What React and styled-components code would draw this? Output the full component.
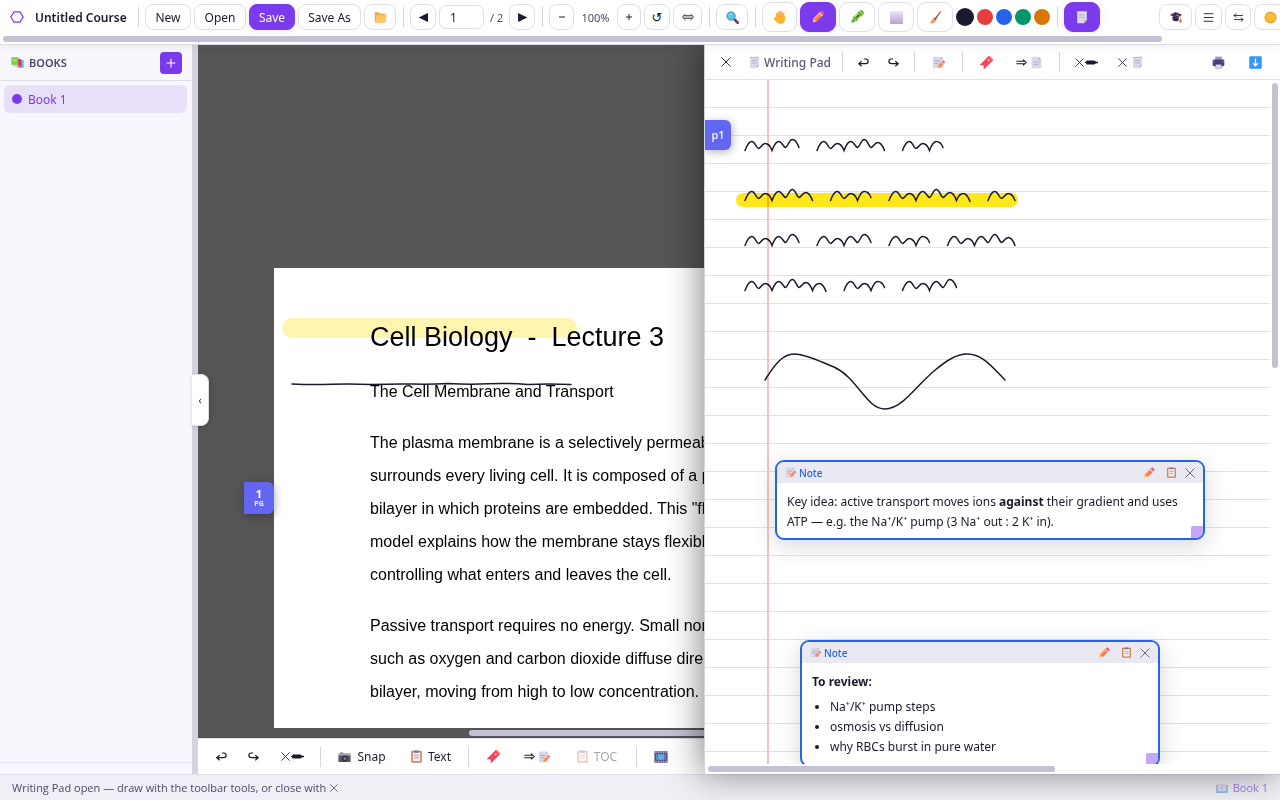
import React from 'react'
import styled, { createGlobalStyle, css } from 'styled-components'

const GlobalStyle = createGlobalStyle`
* {
  box-sizing: border-box;
}
body {
  margin: 0;
  overflow: hidden;
  color: #1a1a2e;
  font-family: "Noto Sans", "Open Sans", sans-serif;
  font-size: 12px;
}
button, input {
  font-family: inherit;
  font-size: 12px;
  color: inherit;
  margin: 0;
}
svg {
  flex: none;
}
`

const Screen = styled.div`
display: flex;
flex-direction: column;
height: 100vh;
background-color: #ffffff;
`

/* ---------- top bar ---------- */

const TopBar = styled.header`
flex: none;
position: relative;
z-index: 3;
background-color: #ffffff;
border-bottom: 1px solid #dcdbe6;
box-shadow: 0 2px 8px rgba(0, 0, 0, 0.06);
`

const Tools = styled.div`
display: flex;
align-items: center;
gap: 3px;
height: 34px;
overflow: hidden;
`

const Brand = styled.div`
flex: none;
display: flex;
align-items: center;
gap: 11px;
width: 131px;
padding-left: 10px;
font-weight: 600;
white-space: nowrap;
`

const Sep = styled.span`
flex: none;
width: 1px;
height: 20px;
margin: 0 3px 0 4px;
background-color: #d4d4e0;
`

const ToolButton = styled.button`
flex: none;
display: flex;
align-items: center;
justify-content: center;
width: ${props => props.$w}px;
height: 26px;
padding: 0;
border: 1px solid #dfdeea;
border-radius: 8px;
background-color: #ffffff;
white-space: nowrap;
${props => props.$tall && css`
  height: 30px;
  border-radius: 9px;
`}
${props => props.$active && css`
  border-color: #7c3aed;
  background-color: #7c3aed;
  color: #ffffff;
  box-shadow: 0 2px 8px rgba(124, 58, 237, 0.12);
`}
`

const PageInput = styled.input`
flex: none;
width: 45px;
height: 24px;
padding: 0 10px;
border: 1px solid #dfdeea;
border-radius: 7px;
background-color: #ffffff;
outline: none;
`

const Glyph = styled.span`
font-family: "DejaVu Sans", sans-serif;
font-size: 13px;
`

const ToolText = styled.span`
flex: none;
width: ${props => props.$w}px;
text-align: center;
font-size: 11px;
color: #4a4a68;
white-space: nowrap;
`

const Swatch = styled.button`
flex: none;
width: ${props => (props.$picked ? 18 : 16)}px;
height: ${props => (props.$picked ? 18 : 16)}px;
padding: 0;
border: none;
border-radius: 50%;
background-color: ${props => props.$color};
`

const Spacer = styled.span`
flex: none;
width: 53px;
`

const ScrollRow = styled.div`
flex: none;
height: 10px;
padding: 2px 3px;
`

const Thumb = styled.div`
width: ${props => props.$size};
height: 6px;
margin-left: ${props => props.$start || '0'};
border-radius: 3px;
background-color: #c3c1d3;
`

/* ---------- sidebar ---------- */

const Body = styled.div`
flex: 1;
display: flex;
min-height: 0;
position: relative;
`

const Sidebar = styled.aside`
flex: none;
display: flex;
flex-direction: column;
width: 192px;
background-color: #f8f7fd;
`

const SidebarHead = styled.div`
display: flex;
align-items: center;
gap: 5px;
height: 36px;
padding: 0 10px 0 11px;
border-bottom: 1px solid #dfdeea;
font-weight: 600;
font-size: 11px;
color: #4a4a68;
`

const AddButton = styled.button`
display: flex;
align-items: center;
justify-content: center;
width: 22px;
height: 22px;
margin-left: auto;
padding: 0;
border: none;
border-radius: 4px;
background-color: #7c3aed;
color: #ffffff;
`

const BookList = styled.div`
flex: 1;
padding: 4px;
`

const BookItem = styled.button`
display: flex;
align-items: center;
gap: 6px;
width: 183px;
height: 28px;
padding: 0 8px;
border: none;
border-radius: 6px;
background-color: #e8e0f9;
color: #7c3aed;
`

const Dot = styled.span`
width: 10px;
height: 10px;
border-radius: 50%;
background-color: #7c3aed;
`

const SidebarFoot = styled.div`
height: 12px;
border-top: 1px solid #dfdeea;
`

const Resizer = styled.div`
flex: none;
width: 6px;
background-color: #d4d4e0;
position: relative;
`

const Collapse = styled.button`
position: absolute;
z-index: 1;
left: 0;
top: 329px;
width: 17px;
height: 52px;
padding: 0;
border: 1px solid #dfdeea;
border-left: none;
border-radius: 0 8px 8px 0;
background-color: #ffffff;
font-size: 10px;
box-shadow: 1px 1px 5px rgba(0, 0, 0, 0.2);
`

/* ---------- document ---------- */

const Viewer = styled.main`
flex: 1;
display: flex;
flex-direction: column;
min-width: 0;
`

const Canvas = styled.div`
flex: 1;
display: flex;
min-height: 0;
padding: 223px 0 0 76px;
overflow: hidden;
background-color: #555555;
`

const CanvasScroll = styled(ScrollRow)`
height: 11px;
padding: 2px 0;
overflow: hidden;
background-color: #555555;
border-bottom: 1px solid #dfdeea;
`

const Page = styled.article`
flex: none;
position: relative;
width: 800px;
padding: 48px 96px;
background-color: #ffffff;
color: #000000;
font-family: "Liberation Sans", Arial, sans-serif;
font-size: 16px;
line-height: 33px;
white-space: pre;
`

const PageTitle = styled.h1`
margin: 0 0 17px;
font-size: 27px;
font-weight: 400;
line-height: 42px;
`

const Paragraph = styled.p`
margin: 0 0 18px;
`

const PageInk = styled.svg`
position: absolute;
left: 0;
top: 40px;
mix-blend-mode: multiply;
`

const Tag = styled.span`
position: absolute;
left: ${props => props.$left}px;
top: ${props => props.$top}px;
z-index: 1;
display: flex;
flex-direction: column;
align-items: center;
justify-content: center;
width: ${props => props.$w}px;
height: ${props => props.$h}px;
border-radius: 0 6px 6px 0;
background-color: #6366f1;
color: #ffffff;
font-family: "Noto Sans", "Open Sans", sans-serif;
font-size: 11px;
font-weight: ${props => (props.$bold ? 700 : 500)};
line-height: 12px;
box-shadow: 1px 2px 8px rgba(0, 0, 0, 0.3);
`

const TagUnit = styled.small`
font-size: 7px;
line-height: 8px;
opacity: 0.9;
`

const Strip = styled.div`
flex: none;
display: flex;
align-items: center;
height: 35px;
padding: 0 6px 0 ${props => props.$pad || 0}px;
background-color: #ffffff;
${props => props.$line && css`
  border-bottom: 1px solid #dfdfe8;
`}
`

const StripSep = styled(Sep)`
margin: 0 5px;
`

const StripButton = styled.button`
flex: none;
display: flex;
align-items: center;
justify-content: center;
gap: ${props => props.$gap || 0}px;
width: ${props => props.$w}px;
height: 28px;
padding: 0;
border: none;
background: none;
white-space: nowrap;
margin-left: ${props => (props.$push ? 'auto' : '0')};
opacity: ${props => (props.disabled ? 0.4 : 1)};
`

/* ---------- writing pad ---------- */

const Pad = styled.section`
position: absolute;
z-index: 2;
top: 0;
right: 0;
bottom: 0;
display: flex;
flex-direction: column;
width: 45%;
border-left: 1px solid #d4d4e0;
background-color: #ffffff;
box-shadow: -4px 0 32px rgba(0, 0, 0, 0.45);
`

const PadTitle = styled.h2`
flex: none;
display: flex;
align-items: center;
gap: 3px;
width: 90px;
margin: 0;
padding-left: 1px;
font-size: 12px;
font-weight: 500;
color: #5a5a75;
white-space: nowrap;
`

const PadMain = styled.div`
flex: 1;
display: flex;
min-height: 0;
`

const Paper = styled.div`
flex: 1;
position: relative;
overflow: hidden;
background-image:
  linear-gradient(90deg, transparent 62px, #f9bfc1 62px, #f9bfc1 64px, transparent 64px),
  repeating-linear-gradient(#ffffff 0, #ffffff 27px, #dae3ec 27px, #dae3ec 28px);
`

const PadInk = styled.svg`
position: absolute;
left: 0;
top: 0;
mix-blend-mode: multiply;
`

const SideScroll = styled.div`
flex: none;
width: 10px;
padding: 3px 2px;
`

const SideThumb = styled.div`
width: 6px;
height: 42%;
border-radius: 3px;
background-color: #c3c1d3;
`

const NoteCard = styled.div`
position: absolute;
left: ${props => props.$left}px;
top: ${props => props.$top}px;
width: ${props => props.$w}px;
border: 2px solid #2563eb;
border-radius: 9px;
background-color: #ffffff;
overflow: hidden;
box-shadow: 0 6px 24px rgba(0, 0, 0, 0.16);
`

const NoteHead = styled.div`
display: flex;
align-items: center;
height: 21px;
padding: 0 6px 0 8px;
background-color: #eae8f0;
font-size: 10px;
color: #2563eb;
font-weight: 500;
`

const NoteName = styled.span`
flex: 1;
margin-left: 3px;
`

const NoteAction = styled.button`
display: flex;
align-items: center;
justify-content: center;
width: 23px;
height: 20px;
padding: 0;
border: none;
background: none;
color: #5a5a75;
&:last-child {
  width: 14px;
}
`

const NoteBody = styled.div`
padding: 9px 10px 6px;
font-size: 12px;
line-height: 20px;
p {
  margin: 0;
  white-space: nowrap;
}
ul {
  margin: 5px 0 2px;
  padding-left: 18px;
}
`

const Corner = styled.span`
position: absolute;
right: 0;
bottom: 0;
width: 12px;
height: 12px;
border-radius: 2px 0 0 0;
background-color: #c4a7f5;
`

const StatusBar = styled.footer`
flex: none;
display: flex;
align-items: center;
justify-content: space-between;
height: 26px;
padding: 0 12px;
border-top: 1px solid #dfdeea;
background-color: #f0eff6;
font-family: "Open Sans", "Noto Sans", sans-serif;
font-size: 11px;
color: #4a4a68;
`

const StatusText = styled.span`
display: flex;
align-items: center;
gap: 3px;
`

const StatusBook = styled(StatusText)`
gap: 5px;
color: #9f78ee;
`

/* ---------- icons ---------- */

const line = { fill: 'none', stroke: 'currentColor', strokeWidth: 1.3 }

const pen = (
  <g transform="rotate(45 8 8)">
    <path d="M5.4 3h5.2v10L8 16l-2.6-3z" fill="#fb7c3c" />
    <path d="M5.4 3.6h1.9V13H5.4z" fill="#ffa05c" />
    <path d="M5.4 2.4h5.2v1.8H5.4z" fill="#d9d4e4" />
    <path d="M5.4 2.4V.8Q5.4-.6 6.8-.6h2.4q1.4 0 1.4 1.400v1.6z" fill="#f8516b" />
    <path d="M5.4 13h5.2L8 16.5z" fill="#fbc08d" />
  </g>
)

const sheet = (
  <g>
    <path d="M2.5 1h11v10.5L10.5 15h-8z" fill="#ddd7ea" />
    <path d="M13.5 11.5h-3V15z" fill="#b8aecb" />
    <path d="M4.5 5.5H11M4.5 8.5H11" stroke="#b3a9c4" fill="none" />
    <path d="M3.5 1.8h1.4M6.3 1.8h1.4M9.1 1.8h1.4M11.6 1.8h1.2" stroke="#a399b5" strokeWidth="1.2" />
  </g>
)

const icons = {
  hexagon: <path d="M4.6 2.2h6.8L15 8l-3.6 5.8H4.6L1 8z" fill="none" stroke="#7c3aed" strokeWidth="1.4" />,
  folder: (
    <g>
      <path d="M1 1.5h5l1.3 2H14v10H1z" fill="#f3a63b" />
      <path d="M3.2 5h12.6l-2 9.8H1z" fill="#ffc765" />
    </g>
  ),
  prev: <path d="M13.5 2.5v11L2 8z" fill="currentColor" />,
  next: <path d="M2.5 2.5v11L14 8z" fill="currentColor" />,
  minus: <path d="M4 8h8" {...line} />,
  plus: <path d="M8 4v8M4 8h8" {...line} />,
  plusBig: <path d="M8 1v14M1 8h14" {...line} strokeWidth="1.7" />,
  fit: <path d="M3 6.4h10M3 9.6h10M4.5 4.2L.6 8l3.900 3.800M11.5 4.2L15.4 8l-3.9 3.8" {...line} />,
  search: (
    <g>
      <path d="M10.5 10.5l4 4" stroke="#6c3f78" strokeWidth="3.2" strokeLinecap="round" />
      <circle cx="6.2" cy="6.2" r="5.1" fill="#52c8ee" stroke="#4a7f9f" strokeWidth="1.2" />
      <path d="M3.8 5.5a3 3 0 0 1 3-2.2" stroke="#b9eefd" fill="none" />
    </g>
  ),
  hand: (
    <g fill="none" stroke="#ffb62e" strokeWidth="2.2" strokeLinecap="round">
      <path d="M4.6 8V4.2M7 8V2M9.5 8V1.9M12 8V4" />
      <path d="M4 8h8.6q1 5-2.4 6.6H7.8Q5 14.4 2 9.4" fill="#ffb62e" />
      <path d="M5.8 4v3.8M8.25 3v4.8M10.75 3.5V8" stroke="#f49a20" strokeWidth=".5" />
    </g>
  ),
  pencil: pen,
  crayon: (
    <g transform="rotate(45 8 8)">
      <path d="M5 0h6v12H5z" fill="#b4dc48" />
      <path d="M5 2.2h6v1.200H5zM5 10h6v1.2H5z" fill="#3e7f3e" />
      <path d="M6.9 4.2h2.2v5H6.9z" fill="#386b45" />
      <path d="M5 .4Q5-1.5 8-1.5T11 .4z" fill="#65b53e" />
      <path d="M5.5 12h5L9 16.5H7z" fill="#4bb061" />
    </g>
  ),
  eraser: (
    <g>
      <defs>
        <linearGradient id="soap" x1="0" y1="0" x2="0" y2="1">
          <stop offset="0" stopColor="#eee6f7" />
          <stop offset="1" stopColor="#b9a2d1" />
        </linearGradient>
      </defs>
      <rect x="1" y="1" width="14" height="14" rx="1" fill="url(#soap)" />
    </g>
  ),
  brush: (
    <g>
      <path d="M14.2 1l1 .7-6 9-1.6-1.2z" fill="#a3543f" />
      <path d="M7.2 8.6l2.6 2-1 1.4L6 9.9z" fill="#8d4a63" />
      <path d="M5.9 9.8l3 2.3Q7.5 15.5 2.5 15q1-3 3.4-5.2z" fill="#ff8f5a" />
    </g>
  ),
  pad: sheet,
  cap: (
    <g>
      <path d="M4 7.5v4q3.5 2.6 7 .4V7.5z" fill="#352a4d" />
      <path d="M1 5.6l6.4-3.2 7.600 3-5.800 4z" fill="#45365f" />
      <path d="M8 5.7l5 2v3.500" stroke="#f0854a" fill="none" />
      <path d="M12 10.600h2l.6 3.600h-2.800z" fill="#e8664a" />
    </g>
  ),
  menu: <path d="M1 2.5h14M1 8h14M1 13.5h14" {...line} />,
  swap: <path d="M1.5 5h13M14.5 11h-13M4.5 2L1.5 5l3 3M11.5 8l3 3-3 3" {...line} />,
  sun: (
    <g>
      <circle cx="8" cy="8" r="6.8" fill="#f0952c" stroke="#f0952c" strokeWidth="1.2" strokeDasharray="2 1" />
      <circle cx="8" cy="8" r="5.6" fill="#fcc12f" />
    </g>
  ),
  books: (
    <g>
      <path d="M9 5h6.5v9.5H9z" fill="#43b6e8" />
      <path d="M6 3.5h6.3v10H6z" fill="#d8345a" />
      <path d="M.5 1.5H9V11H.5z" fill="#7ccb50" />
      <path d="M2 11h7v2.2H3z" fill="#d9d3e6" />
      <path d="M7 13h5.5v1.6H8z" fill="#b5acc6" />
      <path d="M2.2 3.5H7V7H2.2z" fill="#9ade6a" />
    </g>
  ),
  memo: (
    <g>
      <path d="M1 .8h9.8l3 3v11.4H1z" fill="#ddd7ea" />
      <path d="M10.8.8v3h3z" fill="#b8aecb" />
      <path d="M3.2 6h7M3.2 9h4.5" stroke="#a59bb9" fill="none" />
      <g transform="translate(5.4 5.2) scale(.68)">{pen}</g>
    </g>
  ),
  sheet: (
    <g>
      <path d="M2 1h8.5L14 4.5V15H2z" fill="#ddd7ea" />
      <path d="M10.5 1v3.5H14z" fill="#b8aecb" />
      <path d="M4 7.5h8M4 10.5h6" stroke="#b0a6c2" fill="none" />
    </g>
  ),
  ribbon: (
    <g transform="rotate(45 8 8)">
      <path d="M4.3-.5h7.4v17L8 13l-3.7 3.5z" fill="#f8405f" />
      <path d="M4.3-.5h7.4v1.9H4.3z" fill="#ff8259" />
      <circle cx="8" cy="4.2" r="1.3" fill="#ffc3b8" />
    </g>
  ),
  printer: (
    <g>
      <path d="M4 .8h8v4H4z" fill="#9f93ba" />
      <rect x=".8" y="4.3" width="14.4" height="8.2" rx="1.8" fill="#4a3d78" />
      <path d="M1.5 5.5h2v3h-2zM12.5 5.5h2v3h-2z" fill="#6a5aa5" />
      <path d="M4.6 10.5h6.8V15H4.6z" fill="#e6e1f1" stroke="#7d6fa5" strokeWidth=".7" />
    </g>
  ),
  download: (
    <g>
      <rect x=".3" y=".3" width="15.4" height="15.4" rx="1.2" fill="#3797f2" />
      <path d="M8 3v9M5 9l3 3 3-3" stroke="#ffffff" strokeWidth="1.6" fill="none" />
    </g>
  ),
  camera: (
    <g>
      <path d="M2.5 3h4v2h-4z" fill="#77717f" />
      <rect x=".5" y="4" width="15" height="3.5" fill="#aaa4b2" />
      <rect x=".5" y="6.8" width="15" height="8" fill="#5b5566" />
      <circle cx="8.5" cy="10.5" r="3.6" fill="#37313f" />
      <circle cx="8.5" cy="10.5" r="1.7" fill="#77809d" />
    </g>
  ),
  clipboard: (
    <g>
      <rect x="1.5" y="1" width="13" height="14.6" rx="1" fill="#cf8153" />
      <path d="M3.4 3h9.2v10.8H3.4z" fill="#f0ebf6" />
      <path d="M5.2.6h5.6v2.8H5.2z" fill="#82798e" />
      <path d="M5 6.5h6M5 9.5h6" stroke="#9f96b5" fill="none" />
    </g>
  ),
  film: (
    <g>
      <rect x=".5" y="1.5" width="15" height="13" fill="#574a87" />
      <path d="M2.5 4.8h11v6.4h-11z" fill="#5db4e0" />
      <path d="M1.5 3h13M1.5 13h13" stroke="#c3bbe0" strokeWidth="1.2" strokeDasharray="1.5 1.4" />
      <path d="M3.8 4.5v7M12.2 4.5v7" stroke="#574a87" strokeWidth=".9" />
    </g>
  ),
  openBook: (
    <g>
      <path d="M.5 4h15v10.4H.5z" fill="#79a9e4" />
      <path d="M2 2.5q3.5-.8 6 1 2.5-1.8 6-1v10q-3.5-.8-6 .8-2.5-1.6-6-.8z" fill="#dfdaee" />
      <path d="M8 3.5v9.8" stroke="#a79bc8" strokeWidth=".8" />
    </g>
  ),
  undo: <path d="M2.6 9.5h8.2a2.900 2.900 0 0 0 0-5.8H8.4M5.800 6.300L2.200 9.500l3.600 3.200" {...line} strokeWidth="1.5" />,
  redo: <path d="M13.4 9.5H5.2a2.900 2.900 0 0 1 0-5.8h2.4M10.200 6.300L13.800 9.500l-3.600 3.200" {...line} strokeWidth="1.5" />,
  close: <path d="M2 2l12 12M14 2L2 14" {...line} strokeWidth="1.2" />,
  arrow: <path d="M.5 6.3h12M.5 9.7h12M10.2 4L14.8 8l-4.600 4" {...line} strokeWidth="1.5" />,
  marker: <path d="M0 7.400h1.500v-1q0-.9.9-.9h9l2.400 1.500H16v2h-2.200l-2.400 1.500h-9q-.9 0-.9-.9v-1H0z" fill="currentColor" />,
}

function Icon({ name, size = 12 }) {
  return (
    <svg width={size} height={size} viewBox="0 0 16 16" aria-hidden="true">
      {icons[name]}
    </svg>
  )
}

/* handwriting: each word is a run of humps, 13.5 wide */
const peaks = [-9, -7, -9, -11, -8, -7]
const dips = [-2, 0, -3, -3, 0, 1]
const HUMP = 13.5

const writing = [
  { y: 70, words: [4, 5, 3] },
  { y: 120, words: [5, 3, 6, 2] },
  { y: 165, words: [4, 4, 3, 5] },
  { y: 210, words: [6, 3, 4] },
]

function scribble(row) {
  let x = 40
  let d = ''
  row.words.forEach(count => {
    let start = row.y + 0.5
    let soft = false
    d += `M${x} ${start}`
    for (let i = 0; i < count; i++) {
      const top = row.y + peaks[i] + 0.5
      const end = row.y + dips[i] + 0.5
      d += soft
        ? `C${x + 2} ${start} ${x + 3.5} ${top} ${x + 6.8} ${top}`
        : `C${x + 1.5} ${start - 4} ${x + 3.8} ${top} ${x + 6.8} ${top}`
      soft = dips[i] < 0 && i < count - 1
      d += soft
        ? `C${x + 10} ${top} ${x + 11.5} ${end} ${x + HUMP} ${end}`
        : `C${x + 9.8} ${top} ${x + 12} ${end - 4} ${x + HUMP} ${end}`
      x += HUMP
      start = end
    }
    x += 18
  })
  return d
}

const colors = ['#1a1a2e', '#e53e3e', '#2563eb', '#059669', '#d97706']

function Note({ left, top, width, children }) {
  return (
    <NoteCard $left={left} $top={top} $w={width}>
      <NoteHead>
        <Icon name="memo" size={11} />
        <NoteName>Note</NoteName>
        <NoteAction aria-label="Edit note"><Icon name="pencil" size={12} /></NoteAction>
        <NoteAction aria-label="Copy note"><Icon name="clipboard" size={11} /></NoteAction>
        <NoteAction aria-label="Close note"><Icon name="close" size={12} /></NoteAction>
      </NoteHead>
      <NoteBody>{children}</NoteBody>
      <Corner />
    </NoteCard>
  )
}

function Header() {
  return (
    <TopBar>
      <Tools>
        <Brand>
          <Icon name="hexagon" size={14} />
          <span>Untitled Course</span>
        </Brand>
        <Sep />
        <ToolButton $w={46}>New</ToolButton>
        <ToolButton $w={52}>Open</ToolButton>
        <ToolButton $w={46} $active>Save</ToolButton>
        <ToolButton $w={63}>Save As</ToolButton>
        <ToolButton $w={32} aria-label="Folder"><Icon name="folder" size={13} /></ToolButton>
        <Sep />
        <ToolButton $w={26} aria-label="Previous page"><Icon name="prev" size={13} /></ToolButton>
        <PageInput aria-label="Page" defaultValue="1" />
        <ToolText $w={19}>/ 2</ToolText>
        <ToolButton $w={26} aria-label="Next page"><Icon name="next" size={13} /></ToolButton>
        <Sep />
        <ToolButton $w={25} aria-label="Zoom out"><Icon name="minus" /></ToolButton>
        <ToolText $w={37}>100%</ToolText>
        <ToolButton $w={24} aria-label="Zoom in"><Icon name="plus" /></ToolButton>
        <ToolButton $w={26} aria-label="Reset zoom"><Glyph>↺</Glyph></ToolButton>
        <ToolButton $w={29} aria-label="Fit width"><Icon name="fit" /></ToolButton>
        <Sep />
        <ToolButton $w={32} aria-label="Search"><Icon name="search" size={13} /></ToolButton>
        <Sep />
        <ToolButton $w={35} $tall aria-label="Hand"><Icon name="hand" size={14} /></ToolButton>
        <ToolButton $w={36} $tall $active aria-label="Pen"><Icon name="pencil" size={14} /></ToolButton>
        <ToolButton $w={36} $tall aria-label="Highlighter"><Icon name="crayon" size={14} /></ToolButton>
        <ToolButton $w={36} $tall aria-label="Eraser"><Icon name="eraser" size={15} /></ToolButton>
        <ToolButton $w={36} $tall aria-label="Brush"><Icon name="brush" size={14} /></ToolButton>
        {colors.map((color, i) => (
          <Swatch key={color} $color={color} $picked={i === 0} aria-label={color} />
        ))}
        <Sep />
        <ToolButton $w={36} $tall $active aria-label="Writing pad"><Icon name="pad" size={14} /></ToolButton>
        <Spacer />
        <ToolButton $w={33} aria-label="Study mode"><Icon name="cap" size={14} /></ToolButton>
        <ToolButton $w={27} aria-label="Outline"><Icon name="menu" size={11} /></ToolButton>
        <ToolButton $w={26} aria-label="Swap sides"><Icon name="swap" size={11} /></ToolButton>
        <ToolButton $w={33} aria-label="Theme"><Icon name="sun" size={13} /></ToolButton>
      </Tools>
      <ScrollRow><Thumb $size="91%" /></ScrollRow>
    </TopBar>
  )
}

function Document() {
  return (
    <Viewer>
      <Canvas>
        <Page>
          <Tag $left={-30} $top={214} $w={30} $h={32} $bold>1<TagUnit>PG</TagUnit></Tag>
          <PageTitle>Cell Biology  -  Lecture 3</PageTitle>
          <Paragraph>The Cell Membrane and Transport</Paragraph>
          <Paragraph>
            The plasma membrane is a selectively permeable barrier that<br />
            surrounds every living cell. It is composed of a phospholipid<br />
            bilayer in which proteins are embedded. This "fluid mosaic"<br />
            model explains how the membrane stays flexible while<br />
            controlling what enters and leaves the cell.
          </Paragraph>
          <Paragraph>
            Passive transport requires no energy. Small nonpolar molecules<br />
            such as oxygen and carbon dioxide diffuse directly through the<br />
            bilayer, moving from high to low concentration.
          </Paragraph>
          <PageInk width="320" height="90" aria-hidden="true">
            <path d="M18 20H293" stroke="#fff5b0" strokeWidth="20" strokeLinecap="round" />
            <path
              d="M18 76q20 1 40 .2t40 .4q22-1 40-.6t36-.4q22 1 40 .2t40 .6q22-1 43 .1"
              fill="none" stroke="#1a1a2e" strokeWidth="1.5" strokeLinecap="round"
            />
          </PageInk>
        </Page>
      </Canvas>
      <CanvasScroll><Thumb $start="25%" $size="50%" /></CanvasScroll>
      <Strip $pad={7}>
        <StripButton $w={32} aria-label="Undo"><Icon name="undo" size={13} /></StripButton>
        <StripButton $w={32} aria-label="Redo"><Icon name="redo" size={13} /></StripButton>
        <StripButton $w={46} aria-label="Clear ink"><Icon name="close" size={11} /><Icon name="marker" size={13} /></StripButton>
        <StripSep />
        <StripButton $w={72} $gap={6}><Icon name="camera" size={13} />Snap</StripButton>
        <StripButton $w={65} $gap={5}><Icon name="clipboard" size={13} />Text</StripButton>
        <StripSep />
        <StripButton $w={38} aria-label="Bookmark"><Icon name="ribbon" size={13} /></StripButton>
        <StripButton $w={50} $gap={3} aria-label="Send to note"><Icon name="arrow" size={11} /><Icon name="memo" size={12} /></StripButton>
        <StripButton $w={69} $gap={5} disabled><Icon name="clipboard" size={13} />TOC</StripButton>
        <StripSep />
        <StripButton $w={38} aria-label="Slides"><Icon name="film" size={14} /></StripButton>
      </Strip>
    </Viewer>
  )
}

function WritingPad() {
  return (
    <Pad>
      <Strip $line>
        <StripButton $w={42} aria-label="Close pad"><Icon name="close" size={12} /></StripButton>
        <PadTitle><Icon name="pad" size={13} />Writing Pad</PadTitle>
        <StripSep />
        <StripButton $w={30} aria-label="Undo"><Icon name="undo" size={13} /></StripButton>
        <StripButton $w={31} aria-label="Redo"><Icon name="redo" size={13} /></StripButton>
        <StripSep />
        <StripButton $w={37} aria-label="Add note"><Icon name="memo" size={13} /></StripButton>
        <StripSep />
        <StripButton $w={37} aria-label="Bookmark"><Icon name="ribbon" size={13} /></StripButton>
        <StripButton $w={49} $gap={3} aria-label="Send to page"><Icon name="arrow" size={11} /><Icon name="sheet" size={13} /></StripButton>
        <StripSep />
        <StripButton $w={42} aria-label="Clear ink"><Icon name="close" size={11} /><Icon name="marker" size={13} /></StripButton>
        <StripButton $w={46} $gap={3} aria-label="Clear pad"><Icon name="close" size={11} /><Icon name="pad" size={13} /></StripButton>
        <StripButton $w={37} $push aria-label="Print"><Icon name="printer" size={13} /></StripButton>
        <StripButton $w={37} aria-label="Download"><Icon name="download" size={13} /></StripButton>
      </Strip>
      <PadMain>
        <Paper>
          <PadInk width="565" height="684" aria-hidden="true">
            <path d="M38 120H306" stroke="#ffe71a" strokeWidth="14" strokeLinecap="round" />
            <g fill="none" stroke="#1a1a2e" strokeWidth="1.5" strokeLinecap="round">
              {writing.map(row => <path key={row.y} d={scribble(row)} />)}
              <path d="M60 300C70 284 78 274 89 274C101 274 116 282 129 287C153 298 161 329 180 329C197 329 210 307 229 291C241 281 251 274 262 274C278 274 288 288 300 300" />
            </g>
          </PadInk>
          <Tag $left={0} $top={40} $w={26} $h={30}>p1</Tag>
          <Note left={70} top={380} width={430}>
            <p>Key idea: active transport moves ions <b>against</b> their gradient and uses</p>
            <p>ATP — e.g. the Na⁺/K⁺ pump (3 Na⁺ out : 2 K⁺ in).</p>
          </Note>
          <Note left={95} top={560} width={360}>
            <p><b>To review:</b></p>
            <ul>
              <li>Na⁺/K⁺ pump steps</li>
              <li>osmosis vs diffusion</li>
              <li>why RBCs burst in pure water</li>
            </ul>
          </Note>
        </Paper>
        <SideScroll><SideThumb /></SideScroll>
      </PadMain>
      <ScrollRow><Thumb $size="61%" /></ScrollRow>
    </Pad>
  )
}

function App() {
  return (
    <Screen>
      <GlobalStyle />
      <Header />
      <Body>
        <Sidebar>
          <SidebarHead>
            <Icon name="books" size={13} />
            BOOKS
            <AddButton aria-label="Add book"><Icon name="plusBig" size={10} /></AddButton>
          </SidebarHead>
          <BookList>
            <BookItem><Dot />Book 1</BookItem>
          </BookList>
          <SidebarFoot />
        </Sidebar>
        <Resizer>
          <Collapse aria-label="Collapse sidebar">‹</Collapse>
        </Resizer>
        <Document />
        <WritingPad />
      </Body>
      <StatusBar>
        <StatusText>
          Writing Pad open — draw with the toolbar tools, or close with
          <Icon name="close" size={10} />
        </StatusText>
        <StatusBook><Icon name="openBook" size={12} />Book 1</StatusBook>
      </StatusBar>
    </Screen>
  )
}

export default App
